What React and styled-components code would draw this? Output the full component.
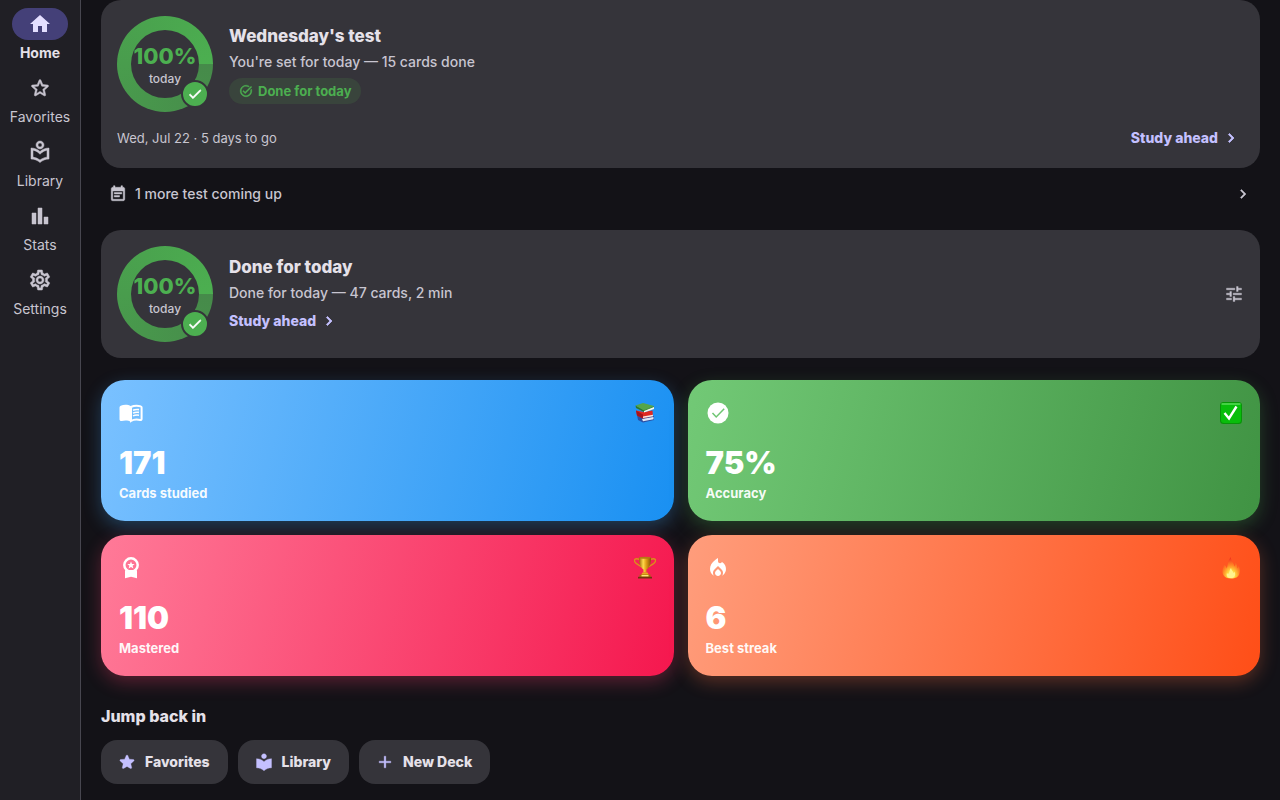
import React from "react";
import styled, { createGlobalStyle } from "styled-components";
import {
  MdHome,
  MdOutlineLocalLibrary,
  MdLocalLibrary,
  MdBarChart,
  MdOutlineSettings,
  MdTaskAlt,
  MdEventNote,
  MdChevronRight,
  MdTune,
  MdLocalFireDepartment,
  MdAdd,
  MdCheck,
} from "react-icons/md";

const colors = {
  page: "#131217",
  rail: "#201f25",
  line: "#47464f",
  card: "#35343a",
  text: "#e5e1e9",
  muted: "#c8c5d0",
  accent: "#c4c0ff",
  pill: "#444078",
  pillText: "#e4dfff",
  green: "#4caf50",
};

const GlobalStyle = createGlobalStyle`
  *, *::before, *::after { box-sizing: border-box; }
  body {
    margin: 0;
    background: ${colors.page};
    color: ${colors.text};
    font-family: Inter, "Liberation Sans", sans-serif;
    font-size: 14px;
    line-height: 20px;
  }
  button { font: inherit; color: inherit; border: 0; background: none; padding: 0; cursor: pointer; }
  a { color: inherit; text-decoration: none; }
  h2, p { margin: 0; }
  svg { display: block; flex: none; }
  svg[stroke="currentColor"] path[fill="none"] { stroke: none; }
`;

const Shell = styled.div`
  display: flex;
  min-height: 100vh;
`;

const Rail = styled.nav`
  flex: none;
  width: 81px;
  padding-top: 8px;
  background: ${colors.rail};
  border-right: 1px solid ${colors.line};
  display: flex;
  flex-direction: column;
  gap: 8px;
`;

const RailLink = styled.a`
  display: flex;
  flex-direction: column;
  align-items: center;
  gap: 3px;
  height: 56px;
  color: ${(p) => (p.$active ? colors.text : colors.muted)};
  font-weight: ${(p) => (p.$active ? 700 : 400)};
`;

const RailPill = styled.span`
  display: grid;
  place-items: center;
  width: 56px;
  height: 32px;
  border-radius: 16px;
  background: ${(p) => (p.$active ? colors.pill : "transparent")};
  color: ${(p) => (p.$active ? colors.pillText : colors.muted)};

  svg {
    stroke: currentColor;
    stroke-width: ${(p) => (p.$active ? 0 : 0.5)};
  }
`;

const Main = styled.main`
  flex: 1;
  min-width: 0;
  padding: 0 20px 16px;
  overflow: hidden;
`;

const Card = styled.section`
  background: ${colors.card};
  border-radius: 20px;
  padding: 16px;
`;

const Row = styled.div`
  display: flex;
  align-items: center;
  gap: 16px;
`;

const CardFooter = styled.div`
  display: flex;
  align-items: center;
  justify-content: space-between;
  padding: 14px 4px 2px 0;
`;

const Info = styled.div`
  flex: 1;
  display: flex;
  flex-direction: column;
  align-items: flex-start;
`;

const Title = styled.h2`
  font-size: 17px;
  line-height: 24px;
  font-weight: 800;
`;

const Text = styled.p`
  font-size: 14px;
  line-height: 20px;
  padding: 4px 0 6px;
  font-weight: 500;
  color: ${colors.muted};
`;

const DateText = styled.p`
  font-size: 13px;
  line-height: 20px;
  color: ${colors.muted};
`;

const DoneChip = styled.span`
  display: flex;
  align-items: center;
  gap: 5px;
  height: 26px;
  padding: 0 10px;
  border-radius: 13px;
  background: #39443c;
  color: ${colors.green};
  font-size: 13px;
  font-weight: 700;

  svg { stroke: currentColor; stroke-width: 0.6; }
`;

const StudyButton = styled.button`
  display: flex;
  align-items: center;
  gap: 4px;
  height: 24px;
  color: ${colors.accent};
  font-size: 14px;
  font-weight: 800;

  svg { stroke: currentColor; stroke-width: 1; }
`;

const RingTrack = styled.div`
  position: relative;
  flex: none;
  width: 96px;
  height: 96px;
  padding: 14px;
  border-radius: 50%;
  background: conic-gradient(from 90deg, #468a4a, ${colors.green});
`;

const RingFace = styled.div`
  display: flex;
  flex-direction: column;
  align-items: center;
  justify-content: center;
  gap: 1px;
  height: 100%;
  padding-top: 4px;
  border-radius: 50%;
  background: ${colors.card};
`;

const RingValue = styled.strong`
  font-size: 22px;
  line-height: 24px;
  font-weight: 800;
  color: ${colors.green};
`;

const RingLabel = styled.span`
  font-size: 12px;
  line-height: 20px;
  font-weight: 500;
  color: ${colors.muted};
`;

const RingBadge = styled.span`
  position: absolute;
  right: 4px;
  bottom: 4px;
  display: grid;
  place-items: center;
  width: 28px;
  height: 28px;
  border: 2px solid ${colors.card};
  border-radius: 50%;
  background: ${colors.green};
  color: #fff;

  svg { stroke: currentColor; stroke-width: 1; }
`;

const MoreButton = styled.button`
  display: flex;
  align-items: center;
  gap: 8px;
  width: 100%;
  height: 62px;
  padding: 0 8px 10px;
  text-align: left;
  font-weight: 500;
  color: ${colors.muted};

  span { flex: 1; }
  svg { stroke: currentColor; stroke-width: 0.6; }
`;

const IconButton = styled.button`
  display: grid;
  place-items: center;
  width: 20px;
  height: 40px;
  color: ${colors.muted};

  svg { stroke: currentColor; stroke-width: 0.4; }
`;

const StatGrid = styled.div`
  display: grid;
  grid-template-columns: 1fr 1fr;
  gap: 14px;
  margin-top: 22px;
`;

const StatCard = styled.article`
  height: 141px;
  padding: 20px 18px 0;
  border-radius: 24px;
  color: #fff;
  background: linear-gradient(104deg, ${(p) => p.$from}, ${(p) => p.$to});
  box-shadow: 0 6px 18px ${(p) => p.$glow};
`;

const StatHead = styled.div`
  display: flex;
  align-items: center;
  justify-content: space-between;
  height: 25px;
`;

const StatValue = styled.p`
  margin-top: 20px;
  font-size: 31px;
  line-height: 36px;
  font-weight: 900;
`;

const StatLabel = styled.p`
  margin-top: 2px;
  font-size: 13px;
  line-height: 20px;
  font-weight: 700;
  color: rgba(255, 255, 255, 0.94);
`;

const SectionTitle = styled.h2`
  margin: 28px 0 12px;
  font-size: 16px;
  line-height: 24px;
  font-weight: 800;
`;

const Actions = styled.div`
  display: flex;
  flex-wrap: wrap;
  gap: 10px;
`;

const ActionButton = styled.button`
  display: flex;
  align-items: center;
  gap: 8px;
  height: 44px;
  padding: 0 18px 0 16px;
  border-radius: 16px;
  background: ${colors.card};
  font-size: 14px;
  font-weight: 800;

  svg { color: ${colors.accent}; stroke: currentColor; stroke-width: 0.4; }
`;

function StarOutline({ size = 24 }) {
  return (
    <svg width={size} height={size} viewBox="0 0 24 24" fill="currentColor" aria-hidden="true">
      <path d="M19.65 9.04l-4.84-.42-1.89-4.45c-.34-.81-1.5-.81-1.84 0L9.19 8.63l-4.83.41c-.88.07-1.24 1.17-.57 1.75l3.67 3.18-1.1 4.72c-.2.86.73 1.54 1.49 1.08l4.15-2.5 4.15 2.51c.76.46 1.69-.22 1.49-1.08l-1.1-4.73 3.67-3.18c.67-.58.32-1.68-.56-1.75zM12 15.4l-3.76 2.27 1-4.28-3.32-2.88 4.38-.38L12 6.1l1.71 4.04 4.38.38-3.32 2.88 1 4.28L12 15.4z" />
    </svg>
  );
}

function StarFilled({ size = 20 }) {
  return (
    <svg width={size} height={size} viewBox="0 0 24 24" fill="currentColor" aria-hidden="true">
      <path d="M12 17.27l4.15 2.51c.76.46 1.69-.22 1.49-1.08l-1.1-4.72 3.67-3.18c.67-.58.31-1.68-.57-1.75l-4.83-.41-1.89-4.46c-.34-.81-1.5-.81-1.84 0L9.19 8.63l-4.83.41c-.88.07-1.24 1.17-.57 1.75l3.67 3.18-1.1 4.72c-.2.86.73 1.54 1.49 1.08l4.15-2.5z" />
    </svg>
  );
}

function OpenBook({ size = 24 }) {
  return (
    <svg width={size} height={size} viewBox="0 0 24 24" fill="none" aria-hidden="true">
      <path d="M12 5.3C10.3 4.200 8.400 3.800 6.500 3.800c-1.700 0-3.300.3-4.800.9C.9 5 .5 5.600.5 6.400v11.900c0 1.200 1.100 2 2.200 1.700 1.200-.3 2.500-.5 3.800-.5 2 0 3.900.4 5.500 1.500z" fill="#fff" />
      <path d="M12 6c1.700-.9 3.600-1.300 5.500-1.300 1.500 0 2.900.2 4.200.7.600.2.9.6.9 1.200v11.300c0 .8-.7 1.300-1.500 1.100-1.200-.3-2.400-.4-3.600-.4-2 0-3.900.4-5.500 1.400z" stroke="#fff" strokeWidth="2" />
      <path d="M14 9.300c1.700-.8 3.800-1 6-.7M14 12.100c1.700-.8 3.800-1 6-.7M14 14.900c1.700-.8 3.800-1 6-.7" stroke="#fff" strokeWidth="1.600" />
    </svg>
  );
}

function CheckDisc({ size = 24 }) {
  return (
    <svg width={size} height={size} viewBox="0 0 24 24" aria-hidden="true">
      <mask id="disc-check">
        <rect width="24" height="24" fill="#fff" />
        <path d="M6.500 12l3.700 4 8-8.200" fill="none" stroke="#000" strokeWidth="1.500" />
      </mask>
      <circle cx="12" cy="12" r="10.500" fill="#fff" mask="url(#disc-check)" />
    </svg>
  );
}

function Rosette({ size = 24 }) {
  return (
    <svg width={size} height={size} viewBox="0 0 24 24" fill="#fff" aria-hidden="true">
      <circle cx="12" cy="9" r="6.700" fill="none" stroke="#fff" strokeWidth="2.500" />
      <path d="M6 14c1.700 1.300 3.800 2 6 2s4.300-.7 6-2v8.300l-6-1.600-6 1.600z" />
      <path d="M7 14h10v4H7z" />
      <path d="M12 5.500l1 2.500 2.700.1-2.100 1.700.8 2.600-2.400-1.500-2.400 1.500.8-2.600-2.100-1.700 2.700-.1z" />
    </svg>
  );
}

function Books() {
  return (
    <svg width="22" height="22" viewBox="0 0 22 22" aria-hidden="true">
      <path d="M3 13l6 3 11-2v4L9 20.500 4 18z" fill="#2b4fa3" />
      <path d="M8 17l11.500-2v2.300L9 19.200z" fill="#e3e8f4" />
      <path d="M2 8.500L10 10l8.500-1.500L19 14 9 16.500 3 13.500z" fill="#df2a22" />
      <path d="M2 8.500l7 4v4L3 13.500z" fill="#a8141a" />
      <path d="M9 14.500l10-1.700v1.400L9 16z" fill="#f7e9e4" />
      <path d="M1.500 3.500L10 8v2L2 6z" fill="#2b772c" />
      <path d="M10 8l10-3.500v2.500L10 10.500z" fill="#f4f7f0" />
      <path d="M1.500 3.500L9 1l11 3-10 4.500z" fill="#56a548" />
      <path d="M10 8l10-4v1L10 9z" fill="#3c8d36" />
    </svg>
  );
}

function CheckBoxEmoji() {
  return (
    <svg width="22" height="22" viewBox="1 1 22 22" aria-hidden="true">
      <rect x="1" y="1" width="22" height="22" rx="3.5" fill="#079507" />
      <rect x="2" y="2" width="20" height="20" rx="3" fill="#08bd0b" />
      <path d="M3 3h18" stroke="#57d957" strokeWidth="1.4" strokeLinecap="round" />
      <path d="M5.500 12l4.500 5.500L17.500 5.500" fill="none" stroke="#fff" strokeWidth="2.400" />
    </svg>
  );
}

function Trophy() {
  return (
    <svg width="22" height="24" viewBox="0 0 22 24" aria-hidden="true">
      <defs>
        <linearGradient id="cup" x1="0" x2="1">
          <stop offset="0" stopColor="#9a6208" />
          <stop offset=".35" stopColor="#ffd94a" />
          <stop offset=".6" stopColor="#e09d15" />
          <stop offset="1" stopColor="#8a5004" />
        </linearGradient>
      </defs>
      <path d="M5.500 3.500C1 1.500-.5 4 1.200 6.400c1.400 2 3.600 2.200 5.800 4.400M16.500 3.500c4.500-2 6 .5 4.300 2.900-1.400 2-3.600 2.200-5.800 4.400" fill="none" stroke="#d99518" strokeWidth="1.3" />
      <path d="M5 1.500h12c0 6-1.500 10.500-4.500 12v3h-3v-3C6.500 12 5 7.500 5 1.500z" fill="url(#cup)" />
      <ellipse cx="11" cy="1.800" rx="6" ry="1" fill="#b57a12" />
      <path d="M8.500 16.500h5l1.500 3H7z" fill="#e7a91d" />
      <path d="M5.500 18.500h11V21h-11z" fill="#a76d0d" />
      <path d="M7.500 19h7v1.500h-7z" fill="#ffe37b" />
      <path d="M4 20.800h14v1.700H4z" fill="#71350d" />
    </svg>
  );
}

function Flame() {
  return (
    <svg width="22" height="24" viewBox="0 0 22 24" aria-hidden="true">
      <defs>
        <radialGradient id="fire" cx=".5" cy=".85" r=".8">
          <stop offset="0" stopColor="#fff6a0" />
          <stop offset=".3" stopColor="#ffd33c" />
          <stop offset=".6" stopColor="#ff8425" />
          <stop offset="1" stopColor="#f2331f" />
        </radialGradient>
      </defs>
      <path d="M11 22.500C5 22.500 2 19 2.500 14.500 2.800 12 4 11 3.500 8.500 5.500 9 6.500 11 6.500 12.500 8.500 9 7 5 11 1c-.5 4 3 5.500 3.500 9.500C15.500 9.500 15.500 7.500 15 6c2.500 2 2 4.500 2.500 6.500.8-1 1-2 1-3 2 3 1.500 6 .8 8.500C18.500 21 15.500 22.500 11 22.500z" fill="url(#fire)" />
      <path d="M11 22c-3.500 0-5-2-4-5 1 1.300 1.500 1 2 0 .8-1.700.5-3.500 2-5 .5 2.500 2 3 2.500 5 .7-.3 1-.8 1.200-1.500 1.300 4-.2 6.500-3.700 6.500z" fill="#fff38e" />
    </svg>
  );
}

function Ring() {
  return (
    <RingTrack>
      <RingFace>
        <RingValue>100%</RingValue>
        <RingLabel>today</RingLabel>
      </RingFace>
      <RingBadge>
        <MdCheck size={16} />
      </RingBadge>
    </RingTrack>
  );
}

function StudyAhead() {
  return (
    <StudyButton type="button">
      Study ahead
      <MdChevronRight size={18} />
    </StudyButton>
  );
}

const navItems = [
  { label: "Home", Icon: MdHome, active: true },
  { label: "Favorites", Icon: StarOutline },
  { label: "Library", Icon: MdOutlineLocalLibrary },
  { label: "Stats", Icon: MdBarChart },
  { label: "Settings", Icon: MdOutlineSettings },
];

const stats = [
  { value: "171", label: "Cards studied", Icon: OpenBook, Emoji: Books, from: "#7ac1ff", to: "#1990f2", glow: "rgba(66, 165, 245, 0.3)" },
  { value: "75%", label: "Accuracy", Icon: CheckDisc, Emoji: CheckBoxEmoji, from: "#72c976", to: "#409343", glow: "rgba(76, 175, 80, 0.3)" },
  { value: "110", label: "Mastered", Icon: Rosette, Emoji: Trophy, from: "#ff7a98", to: "#f5174e", glow: "rgba(255, 64, 108, 0.3)" },
  { value: "6", label: "Best streak", Icon: MdLocalFireDepartment, Emoji: Flame, from: "#ff9d7c", to: "#ff4e17", glow: "rgba(255, 112, 67, 0.3)" },
];

const actions = [
  { label: "Favorites", Icon: StarFilled },
  { label: "Library", Icon: MdLocalLibrary },
  { label: "New Deck", Icon: MdAdd },
];

export default function App() {
  return (
    <>
      <GlobalStyle />
      <Shell>
        <Rail aria-label="Main">
          {navItems.map(({ label, Icon, active }) => (
            <RailLink key={label} href={`#${label.toLowerCase()}`} $active={active} aria-current={active ? "page" : undefined}>
              <RailPill $active={active}>
                <Icon size={24} />
              </RailPill>
              {label}
            </RailLink>
          ))}
        </Rail>
        <Main>
          <Card>
            <Row>
              <Ring />
              <Info>
                <Title>Wednesday's test</Title>
                <Text>You're set for today — 15 cards done</Text>
                <DoneChip>
                  <MdTaskAlt size={14} />
                  Done for today
                </DoneChip>
              </Info>
            </Row>
            <CardFooter>
              <DateText>Wed, Jul 22 · 5 days to go</DateText>
              <StudyAhead />
            </CardFooter>
          </Card>
          <MoreButton type="button">
            <MdEventNote size={18} />
            <span>1 more test coming up</span>
            <MdChevronRight size={18} />
          </MoreButton>
          <Card>
            <Row>
              <Ring />
              <Info>
                <Title>Done for today</Title>
                <Text>Done for today — 47 cards, 2 min</Text>
                <StudyAhead />
              </Info>
              <IconButton type="button" aria-label="Adjust daily goal">
                <MdTune size={20} />
              </IconButton>
            </Row>
          </Card>
          <StatGrid>
            {stats.map(({ value, label, Icon, Emoji, from, to, glow }) => (
              <StatCard key={label} $from={from} $to={to} $glow={glow}>
                <StatHead>
                  <Icon size={24} />
                  <Emoji />
                </StatHead>
                <StatValue>{value}</StatValue>
                <StatLabel>{label}</StatLabel>
              </StatCard>
            ))}
          </StatGrid>
          <SectionTitle>Jump back in</SectionTitle>
          <Actions>
            {actions.map(({ label, Icon }) => (
              <ActionButton key={label} type="button">
                <Icon size={20} />
                {label}
              </ActionButton>
            ))}
          </Actions>
        </Main>
      </Shell>
    </>
  );
}
